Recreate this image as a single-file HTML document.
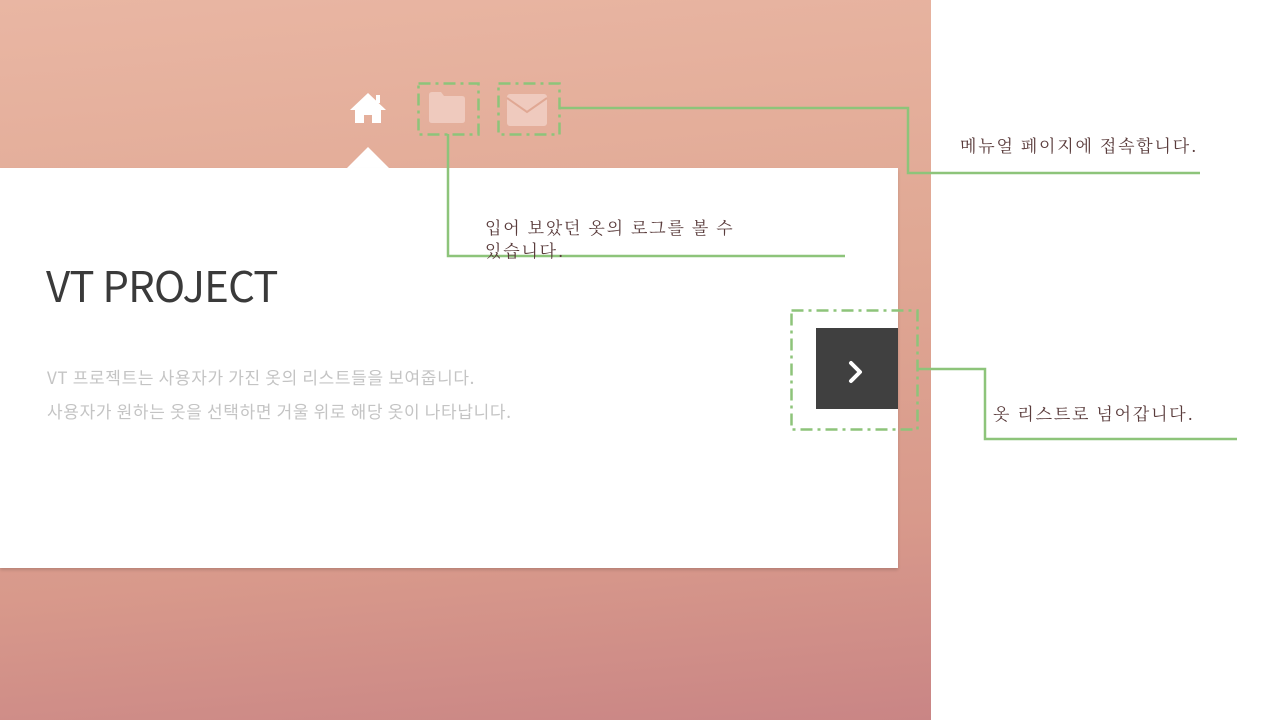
<!DOCTYPE html>
<html><head><meta charset="utf-8"><style>
*{margin:0;padding:0;box-sizing:border-box}
body{width:1280px;height:720px;position:relative;overflow:hidden;background:#fff;font-family:"Liberation Sans","Noto Sans CJK KR",sans-serif}
.bg{position:absolute;left:0;top:0;width:931px;height:720px;background:linear-gradient(175deg,#e9b6a3 0%,#e0a894 40%,#d8998b 75%,#c98585 100%)}
.card{position:absolute;left:0;top:168px;width:898px;height:400px;background:#fff;box-shadow:0 2px 3px rgba(0,0,0,.15)}
.notch{position:absolute;left:346px;top:147px;width:0;height:0;border-left:22px solid transparent;border-right:22px solid transparent;border-bottom:22px solid #fff}
h1{position:absolute;left:46px;top:254px;font-size:42px;font-weight:normal;color:#3a3a3a;letter-spacing:-0.8px;font-family:"Noto Sans CJK KR",sans-serif}
.p{position:absolute;left:47px;font-size:17px;letter-spacing:0.65px;color:#c4c4c4;font-family:"Noto Sans CJK KR",sans-serif}
.btn{position:absolute;left:816px;top:328px;width:82px;height:81px;background:#404040}
.t{position:absolute;font-family:"Noto Serif CJK SC","Noto Serif CJK KR",serif;color:#5a3c3c;font-size:17px;letter-spacing:1.8px;white-space:nowrap;line-height:22px}
</style></head><body>
<div class="bg"></div>
<div class="notch"></div>
<div class="card"></div>
<h1>VT PROJECT</h1>
<div class="p" style="top:364px">VT 프로젝트는 사용자가 가진 옷의 리스트들을 보여줍니다.</div>
<div class="p" style="top:398px">사용자가 원하는 옷을 선택하면 거울 위로 해당 옷이 나타납니다.</div>
<div class="btn"></div>
<svg width="1280" height="720" style="position:absolute;left:0;top:0">
<path d="M368 93 L350 110 L355 110 L355 123 L364 123 L364 115 L372 115 L372 123 L381 123 L381 110 L386 110 Z" fill="#fff"/>
<rect x="376" y="95" width="4" height="8" fill="#fff"/>
<path d="M429 95 q0-3 3-3 h9 l3 4 h18 q3 0 3 3 v21 q0 3-3 3 h-30 q-3 0-3-3 z" fill="#f0cdc2" opacity=".9"/>
<rect x="507" y="94" width="40" height="32" rx="3" fill="#f0cdc2" opacity=".9"/>
<path d="M507 98 L527 112 L547 98" stroke="#e0a894" stroke-width="2" fill="none"/>
<path d="M851 363 L860 372 L851 381" stroke="#fff" stroke-width="4" fill="none" stroke-linecap="round" stroke-linejoin="round"/>
<g stroke="#8dc47a" stroke-width="2.5" fill="none">
<rect x="418.5" y="83.5" width="60" height="51" stroke-dasharray="12,5,3,5"/>
<rect x="498.5" y="83.5" width="61" height="51" stroke-dasharray="12,5,3,5"/>
<rect x="791.5" y="310.5" width="126" height="119" stroke-dasharray="12,5,3,5"/>
<polyline points="560,108 908,108 908,173 1200,173"/>
<polyline points="448,134 448,256 845,256"/>
<polyline points="918,369 985,369 985,439 1237,439"/>
</g>
</svg>
<div class="t" style="left:960px;top:134px">메뉴얼 페이지에 접속합니다.</div>
<div class="t" style="left:485px;top:216px">입어 보았던 옷의 로그를 볼 수</div>
<div class="t" style="left:485px;top:239px">있습니다.</div>
<div class="t" style="left:993px;top:402px">옷 리스트로 넘어갑니다.</div>
</body></html>
